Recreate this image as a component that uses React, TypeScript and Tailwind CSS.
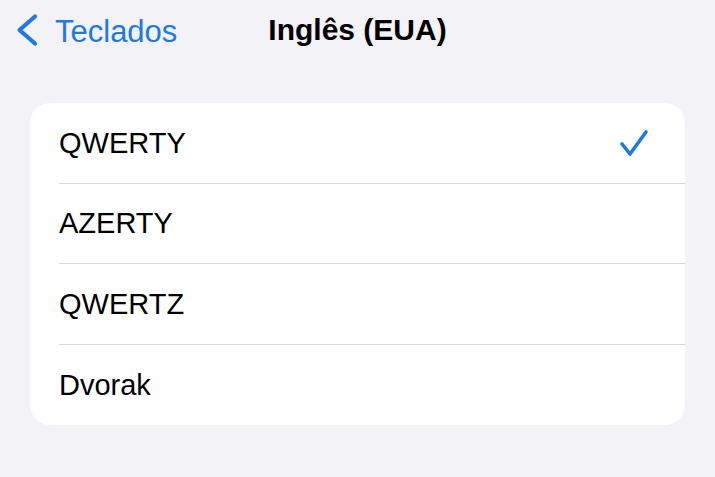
import React from "react";

const rows = ["QWERTY", "AZERTY", "QWERTZ", "Dvorak"];

export default function App() {
  return (
    <div
      className="w-[715px] h-[477px] bg-[#f2f2f7] text-black overflow-hidden"
      style={{ fontFamily: '"Liberation Sans", Arial, sans-serif' }}
    >
      <div className="grid grid-cols-[1fr_auto_1fr] items-center h-[62px]">
        <div className="flex items-center pl-[14px] text-[#1f7ae0]">
          <svg width="24" height="36" viewBox="0 0 24 36" fill="none" className="-mt-[2px]">
            <path
              d="M21 4.5 L5.5 18 L21 31.5"
              stroke="#1f7ae0"
              strokeWidth="4.2"
              strokeLinecap="round"
              strokeLinejoin="round"
            />
          </svg>
          <span className="ml-[17px] text-[31px] leading-none">Teclados</span>
        </div>
        <div className="text-[30px] font-bold leading-none -mt-[3px]">Inglês (EUA)</div>
        <div />
      </div>
      <div className="mt-[41px] mx-[30px] bg-white rounded-[20px] overflow-hidden">
        {rows.map((r, i) => (
          <div key={r} className="pl-[29px]">
            <div
              className={
                "h-[80.5px] flex items-center justify-between pr-[36px] " +
                (i < rows.length - 1 ? "border-b border-[#d9d9dc]" : "")
              }
            >
              <span className="text-[29px] leading-none pt-[1px]">{r}</span>
              {i === 0 && (
                <svg width="30" height="28" viewBox="0 0 30 28" fill="none">
                  <path
                    d="M3 15 L11 25 L27 3"
                    stroke="#1f7ae0"
                    strokeWidth="3.6"
                    strokeLinecap="round"
                    strokeLinejoin="round"
                  />
                </svg>
              )}
            </div>
          </div>
        ))}
      </div>
    </div>
  );
}
